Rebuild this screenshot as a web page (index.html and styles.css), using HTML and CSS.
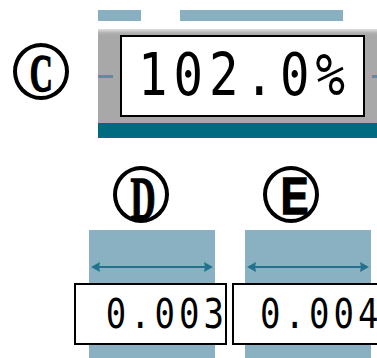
FILE: index.html
```html
<!DOCTYPE html>
<html lang="en">
<head>
    <meta charset="UTF-8">
    <title>Scale detail</title>
    <link rel="stylesheet" href="styles.css">
</head>
<body>
    <div class="top">
        <div class="label-cell">
            <div class="mark mark-c"><span>C</span></div>
        </div>
        <div class="gauge">
            <div class="bars">
                <div class="bar bar-short"></div>
                <div class="bar bar-long"></div>
            </div>
            <div class="band">
                <div class="dash dash-left"></div>
                <div class="readout"><span>102.0%</span></div>
                <div class="dash dash-right"></div>
            </div>
            <div class="base"></div>
        </div>
    </div>

    <div class="bottom">
        <div class="cell cell-d">
            <div class="mark mark-d"><span>D</span></div>
            <div class="stack">
                <div class="column">
                    <svg class="arrow" width="122" height="12" viewBox="0 0 122 12">
                        <line x1="4" y1="6" x2="118" y2="6" stroke="#23718b" stroke-width="2"/>
                        <polygon points="0,6 9,1 8,6 9,11" fill="#23718b"/>
                        <polygon points="122,6 113,1 114,6 113,11" fill="#23718b"/>
                    </svg>
                </div>
                <div class="value value-right"><span>0.003</span></div>
            </div>
        </div>
        <div class="cell cell-e">
            <div class="mark mark-e"><span>E</span></div>
            <div class="stack">
                <div class="column">
                    <svg class="arrow" width="122" height="12" viewBox="0 0 122 12">
                        <line x1="4" y1="6" x2="118" y2="6" stroke="#23718b" stroke-width="2"/>
                        <polygon points="0,6 9,1 8,6 9,11" fill="#23718b"/>
                        <polygon points="122,6 113,1 114,6 113,11" fill="#23718b"/>
                    </svg>
                </div>
                <div class="value"><span>0.004</span></div>
            </div>
        </div>
    </div>
</body>
</html>
```

FILE: styles.css
```css
body {
    margin: 0;
    width: 377px;
    height: 358px;
    overflow: hidden;
    background-color: #fff;
    font-family: "DejaVu Sans Mono", monospace;
}
.top {
    display: grid;
    grid-template-columns: 98px 1fr;
    height: 150px;
}
.mark {
    width: 56px;
    height: 57px;
    box-sizing: border-box;
    border: 4px solid #000;
    border-radius: 50%;
    display: flex;
    align-items: center;
    justify-content: center;
}
.mark span {
    font-family: "Liberation Serif", serif;
    font-weight: bold;
    color: #000;
    line-height: 1;
    display: block;
    -webkit-text-stroke: 1.5px #000;
}
.mark-c {
    margin: 43px 0 0 13px;
}
.mark-c span {
    font-size: 53px;
    transform: scaleX(0.6) translateY(2px);
}
.mark-d span {
    font-size: 62px;
    transform: scaleX(0.56) translate(3px, 3px);
}
.mark-e span {
    font-family: "Liberation Sans", sans-serif;
    font-size: 52px;
    transform: scaleX(0.8) translate(4px, 1px);
}
.gauge {
    display: flex;
    flex-direction: column;
}
.bars {
    display: flex;
    margin-top: 10px;
    height: 11px;
}
.bar {
    background-color: #88b0c0;
}
.bar-short {
    width: 43px;
}
.bar-long {
    width: 163px;
    margin-left: 39px;
}
.band {
    margin-top: 8px;
    height: 94px;
    display: flex;
    align-items: center;
    background: linear-gradient(#e2e2e2 0, #b0b0b0 4px, #a8a8a8 7px);
}
.dash {
    height: 3px;
    background-color: #5a8fa3;
}
.dash-left {
    width: 15px;
}
.dash-right {
    flex: 1;
    margin-left: 7px;
}
.readout {
    margin-left: 7px;
    width: 245px;
    height: 82px;
    box-sizing: border-box;
    border: 2px solid #000;
    background-color: #fff;
    font-size: 49px;
    line-height: 78px;
    padding-left: 16px;
    letter-spacing: 6px;
    color: #000;
}
.readout span,
.value span {
    display: inline-block;
    transform: scaleY(1.2);
}
.base {
    height: 15px;
    background-color: #006a80;
}
.bottom {
    display: flex;
    gap: 5px;
    padding-left: 74px;
}
.cell {
    width: 153px;
    flex-shrink: 0;
}
.cell-d .mark {
    margin: 16px 0 7px 39px;
}
.cell-e .mark {
    margin: 16px 0 7px 31px;
}
.stack {
    display: grid;
}
.column,
.value {
    grid-area: 1 / 1;
}
.column {
    width: 126px;
    height: 128px;
    margin-left: 15px;
    background-color: #8ab1c2;
    padding-top: 31px;
    box-sizing: border-box;
}
.cell-e .column {
    margin-left: 13px;
}
.arrow {
    display: block;
    margin-left: 2px;
}
.value {
    margin-top: 53px;
    height: 62px;
    box-sizing: border-box;
    border: 2px solid #000;
    background-color: #fff;
    font-size: 34px;
    line-height: 58px;
    letter-spacing: 4px;
    padding-left: 26px;
    color: #000;
    white-space: nowrap;
}
.value-right {
    text-align: right;
    padding: 0;
}
.value-right span {
    margin-right: -3px;
}
.cell-e .value {
    width: 160px;
}
```
